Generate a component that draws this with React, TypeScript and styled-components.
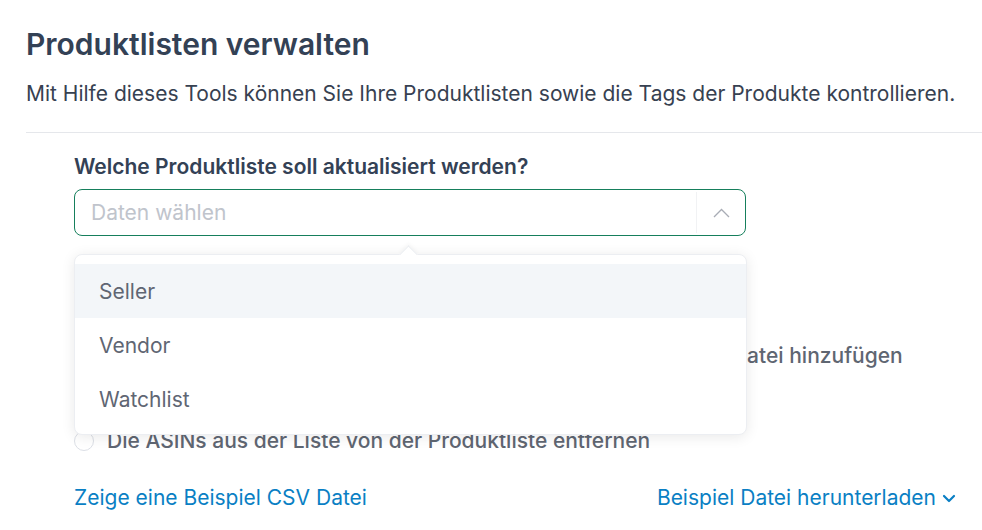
import React from "react";
import styled, { createGlobalStyle } from "styled-components";

const Global = createGlobalStyle`
  html, body { margin: 0; padding: 0; background: #ffffff; }
  body { font-family: Inter, "Noto Sans", "Liberation Sans", sans-serif; -webkit-font-smoothing: antialiased; }
  * { box-sizing: border-box; }
`;

const Page = styled.div`
  padding: 24px 0 0 26px;
  width: 982px;
  height: 530px;
  overflow: hidden;
`;

const Title = styled.h1`
  margin: 0;
  font-size: 30px;
  line-height: 40px;
  font-weight: 600;
  color: #334155;
`;

const Subtitle = styled.p`
  margin: 16px 0 0;
  font-size: 21px;
  line-height: 28px;
  color: #374151;
`;

const Divider = styled.hr`
  margin: 24px 0 0;
  border: 0;
  height: 1px;
  background: #e5e7eb;
`;

const Form = styled.div`
  padding: 0 26px 0 48px;
`;

const FieldLabel = styled.div`
  margin-top: 22px;
  font-size: 21px;
  line-height: 24px;
  font-weight: 600;
  color: #334155;
`;

const SelectWrap = styled.div`
  position: relative;
  margin-top: 10px;
  width: 672px;
`;

const SelectBox = styled.div`
  height: 47px;
  border: 1px solid #167f5c;
  border-radius: 8px;
  display: flex;
  align-items: stretch;
  background: #fff;
`;

const Placeholder = styled.div`
  flex: 1;
  display: flex;
  align-items: center;
  padding-left: 16px;
  font-size: 21px;
  color: #c0c4cc;
`;

const Suffix = styled.div`
  width: 49px;
  margin: 2px 0;
  border-left: 1px solid #f1f2f4;
  display: flex;
  align-items: center;
  justify-content: center;
`;

const Dropdown = styled.div`
  position: absolute;
  top: calc(100% + 18px);
  left: 0;
  width: 673px;
  background: #fff;
  border: 1px solid #eceef2;
  border-radius: 8px;
  box-shadow: 0 2px 14px rgba(0, 0, 0, 0.09);
  padding: 9px 0 8px;
  z-index: 10;
`;

const Arrow = styled.div`
  position: absolute;
  top: -7px;
  left: 327px;
  width: 13px;
  height: 13px;
  background: #fff;
  border-left: 1px solid #eceef2;
  border-top: 1px solid #eceef2;
  transform: rotate(45deg);
  box-shadow: -2px -2px 4px rgba(0, 0, 0, 0.03);
`;

const Option = styled.div<{ $active?: boolean }>`
  height: 54px;
  display: flex;
  align-items: center;
  padding-left: 24px;
  font-size: 21px;
  color: #5f6673;
  background: ${(p) => (p.$active ? "#f3f6f9" : "transparent")};
`;

const SecondLabel = styled(FieldLabel)`
  margin-top: 53px;
`;

const RadioGroup = styled.div`
  margin-top: 31px;
  display: flex;
  flex-direction: column;
  gap: 18.5px;
`;

const RadioRow = styled.label`
  display: flex;
  align-items: center;
  gap: 13px;
  font-size: 21px;
  line-height: 24px;
  font-weight: 500;
  color: #5f6672;
  white-space: nowrap;
`;

const RadioCircle = styled.span`
  width: 20px;
  height: 20px;
  border-radius: 50%;
  border: 1px solid #dcdfe6;
  background: #fff;
  flex: none;
`;

const Links = styled.div`
  margin-top: 33px;
  display: flex;
  justify-content: space-between;
  align-items: center;
`;

const Link = styled.a`
  font-size: 21px;
  line-height: 24px;
  color: #0a7fc4;
  text-decoration: none;
  display: inline-flex;
  align-items: center;
  gap: 6px;
`;

export default function App() {
  return (
    <>
      <Global />
      <Page>
        <Title>Produktlisten verwalten</Title>
        <Subtitle>
          Mit Hilfe dieses Tools können Sie Ihre Produktlisten sowie die Tags der Produkte kontrollieren.
        </Subtitle>
        <Divider />
        <Form>
          <FieldLabel>Welche Produktliste soll aktualisiert werden?</FieldLabel>
          <SelectWrap>
            <SelectBox>
              <Placeholder>Daten wählen</Placeholder>
              <Suffix>
                <svg width="17" height="10" viewBox="0 0 17 10" fill="none">
                  <polyline points="1,9 8.5,1.5 16,9" stroke="#a8acb5" strokeWidth="1.3" />
                </svg>
              </Suffix>
            </SelectBox>
            <Dropdown>
              <Arrow />
              <Option $active>Seller</Option>
              <Option>Vendor</Option>
              <Option>Watchlist</Option>
            </Dropdown>
          </SelectWrap>
          <SecondLabel>Was soll mit den ASINs passieren?</SecondLabel>
          <RadioGroup>
            <RadioRow>
              <RadioCircle />
              Die ASINs aus der Liste in der Produktliste aus der neuen CSV Datei hinzufügen
            </RadioRow>
            <RadioRow>
              <RadioCircle />
              Die Produktliste durch die ASINs aus der Liste ersetzen
            </RadioRow>
            <RadioRow>
              <RadioCircle />
              Die ASINs aus der Liste von der Produktliste entfernen
            </RadioRow>
          </RadioGroup>
          <Links>
            <Link href="#">Zeige eine Beispiel CSV Datei</Link>
            <Link href="#">
              Beispiel Datei herunterladen
              <svg width="14" height="9" viewBox="0 0 14 9" fill="none">
                <polyline points="2,2 7,7 12,2" stroke="#0a7fc4" strokeWidth="2.2" strokeLinecap="round" strokeLinejoin="round" />
              </svg>
            </Link>
          </Links>
        </Form>
      </Page>
    </>
  );
}
